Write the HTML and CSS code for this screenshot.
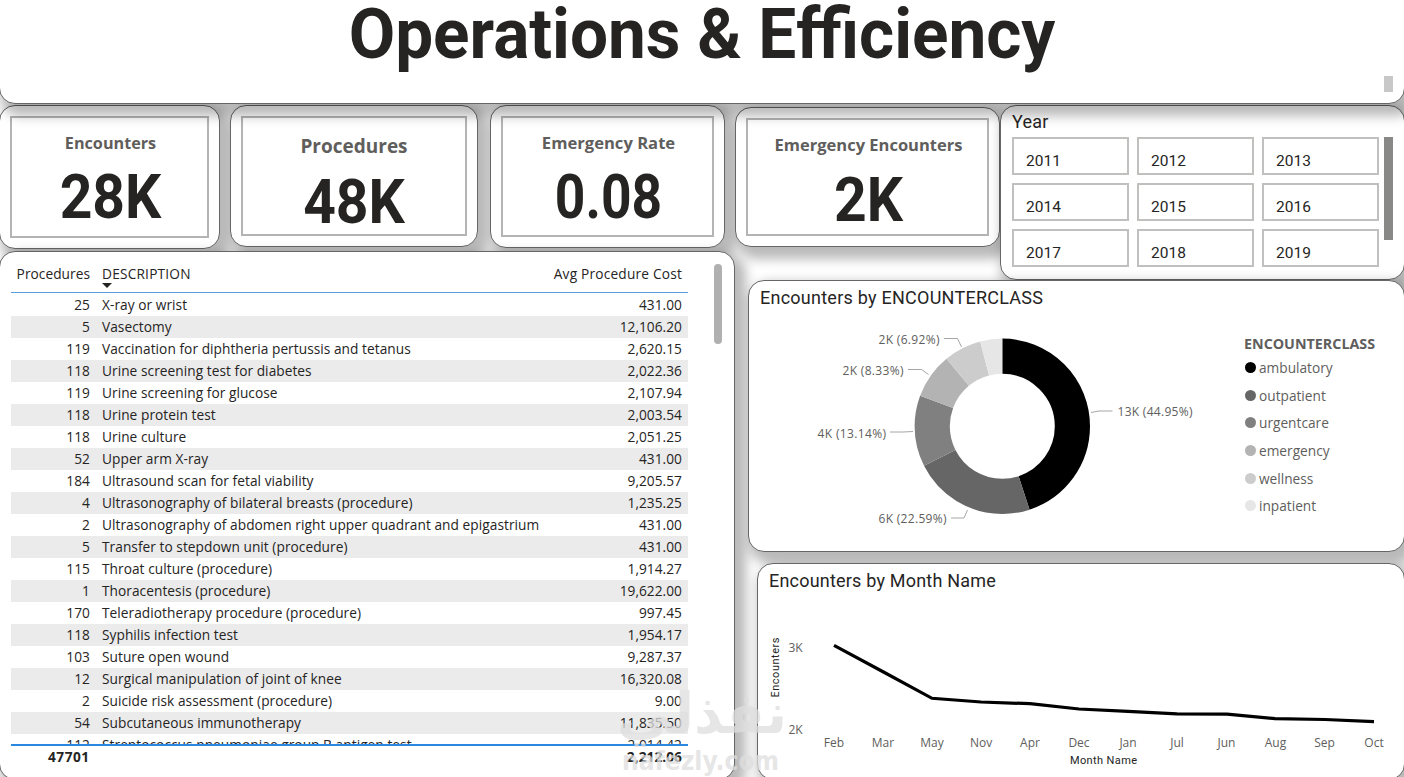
FILE: index.html
```
<!DOCTYPE html>
<html lang="en">
  <head>
    <meta charset="utf-8">
    <meta name="viewport" content="width=device-width, initial-scale=1">
    <title>Operations &amp; Efficiency</title>
    <link rel="stylesheet" href="styles.css">
  </head>
  <body>
    <header class="panel banner">
      <h1>Operations &amp; Efficiency</h1>
      <span class="banner-thumb"></span>
    </header>

    <main class="board">
      <section class="kpis">
        <div class="panel kpi kpi-encounters">
          <div class="kpi-box"><h2>Encounters</h2><p>28K</p></div>
        </div>
        <div class="panel kpi kpi-procedures">
          <div class="kpi-box"><h2>Procedures</h2><p>48K</p></div>
        </div>
        <div class="panel kpi kpi-rate">
          <div class="kpi-box"><h2>Emergency Rate</h2><p>0.08</p></div>
        </div>
        <div class="panel kpi kpi-emergency">
          <div class="kpi-box"><h2>Emergency Encounters</h2><p>2K</p></div>
        </div>
      </section>

      <section class="panel slicer">
        <h3>Year</h3>
        <div class="slicer-body">
          <div class="years">
            <button>2011</button><button>2012</button><button>2013</button>
            <button>2014</button><button>2015</button><button>2016</button>
            <button>2017</button><button>2018</button><button>2019</button>
          </div>
          <span class="slicer-thumb"></span>
        </div>
      </section>

      <section class="panel procedures">
        <div class="table-wrap">
          <div class="table-clip">
            <table>
              <thead>
                <tr><th>Procedures</th><th class="desc">DESCRIPTION<i class="sort"></i></th><th class="cost">Avg Procedure Cost</th></tr>
              </thead>
              <tbody>
                <tr><td>25</td><td>X-ray or wrist</td><td>431.00</td></tr>
                <tr><td>5</td><td>Vasectomy</td><td>12,106.20</td></tr>
                <tr><td>119</td><td>Vaccination for diphtheria pertussis and tetanus</td><td>2,620.15</td></tr>
                <tr><td>118</td><td>Urine screening test for diabetes</td><td>2,022.36</td></tr>
                <tr><td>119</td><td>Urine screening for glucose</td><td>2,107.94</td></tr>
                <tr><td>118</td><td>Urine protein test</td><td>2,003.54</td></tr>
                <tr><td>118</td><td>Urine culture</td><td>2,051.25</td></tr>
                <tr><td>52</td><td>Upper arm X-ray</td><td>431.00</td></tr>
                <tr><td>184</td><td>Ultrasound scan for fetal viability</td><td>9,205.57</td></tr>
                <tr><td>4</td><td>Ultrasonography of bilateral breasts (procedure)</td><td>1,235.25</td></tr>
                <tr><td>2</td><td>Ultrasonography of abdomen right upper quadrant and epigastrium</td><td>431.00</td></tr>
                <tr><td>5</td><td>Transfer to stepdown unit (procedure)</td><td>431.00</td></tr>
                <tr><td>115</td><td>Throat culture (procedure)</td><td>1,914.27</td></tr>
                <tr><td>1</td><td>Thoracentesis (procedure)</td><td>19,622.00</td></tr>
                <tr><td>170</td><td>Teleradiotherapy procedure (procedure)</td><td>997.45</td></tr>
                <tr><td>118</td><td>Syphilis infection test</td><td>1,954.17</td></tr>
                <tr><td>103</td><td>Suture open wound</td><td>9,287.37</td></tr>
                <tr><td>12</td><td>Surgical manipulation of joint of knee</td><td>16,320.08</td></tr>
                <tr><td>2</td><td>Suicide risk assessment (procedure)</td><td>9.00</td></tr>
                <tr><td>54</td><td>Subcutaneous immunotherapy</td><td>11,835.50</td></tr>
                <tr><td>112</td><td>Streptococcus pneumoniae group B antigen test</td><td>2,014.42</td></tr>
              </tbody>
            </table>
          </div>
          <div class="totals"><span>47701</span><span>2,212.06</span></div>
        </div>
        <span class="table-thumb"></span>
      </section>

      <section class="charts">
        <div class="panel donut">
          <h3>Encounters by ENCOUNTERCLASS</h3>
          <div class="donut-body">
            <svg class="donut-chart" width="479" height="230" viewBox="760 312 479 230">
              <g transform="rotate(-90 1002.3 426.3)" fill="none" stroke-width="35.2">
                <circle cx="1002.3" cy="426.3" r="70.1" pathLength="100" stroke="#000" stroke-dasharray="44.95 100"/>
                <circle cx="1002.3" cy="426.3" r="70.1" pathLength="100" stroke="#666" stroke-dasharray="22.59 100" stroke-dashoffset="-44.95"/>
                <circle cx="1002.3" cy="426.3" r="70.1" pathLength="100" stroke="#808080" stroke-dasharray="13.14 100" stroke-dashoffset="-67.54"/>
                <circle cx="1002.3" cy="426.3" r="70.1" pathLength="100" stroke="#b3b3b3" stroke-dasharray="8.33 100" stroke-dashoffset="-80.68"/>
                <circle cx="1002.3" cy="426.3" r="70.1" pathLength="100" stroke="#ccc" stroke-dasharray="6.92 100" stroke-dashoffset="-89.01"/>
                <circle cx="1002.3" cy="426.3" r="70.1" pathLength="100" stroke="#e6e6e6" stroke-dasharray="4.07 100" stroke-dashoffset="-95.93"/>
              </g>
              <g class="leaders">
                <polyline points="1091,412.5 1099,411 1112.5,411"/>
                <polyline points="967.5,510 964,518 951,518"/>
                <polyline points="913,431.5 903,432 890,432"/>
                <polyline points="928.5,374.5 921.5,369.5 908,369.5"/>
                <polyline points="961.5,347 957.5,338.5 944,338.5"/>
              </g>
              <g class="chart-label">
                <text x="1117.5" y="416" textLength="75">13K (44.95%)</text>
                <text x="878.5" y="523" textLength="68">6K (22.59%)</text>
                <text x="817.5" y="438" textLength="68.5">4K (13.14%)</text>
                <text x="842.5" y="375" textLength="61">2K (8.33%)</text>
                <text x="878.5" y="344" textLength="61">2K (6.92%)</text>
              </g>
            </svg>
            <div class="legend">
              <h4>ENCOUNTERCLASS</h4>
              <ul>
                <li class="c1">ambulatory</li>
                <li class="c2">outpatient</li>
                <li class="c3">urgentcare</li>
                <li class="c4">emergency</li>
                <li class="c5">wellness</li>
                <li class="c6">inpatient</li>
              </ul>
            </div>
          </div>
        </div>

        <div class="panel trend">
          <h3>Encounters by Month Name</h3>
          <svg class="trend-chart" width="636" height="177" viewBox="769 600 636 177">
            <polyline class="series" points="834,645.3 883.5,672 932,698.3 981,702 1030,703.7 1079,709 1128,711.3 1177,713.9 1227,714.2 1275,718.6 1325,719.5 1374,721.7"/>
            <g class="chart-label">
              <text x="788.5" y="652">3K</text>
              <text x="788.5" y="734">2K</text>
            </g>
            <g class="chart-label months">
              <text x="834" y="747">Feb</text>
              <text x="883" y="747">Mar</text>
              <text x="932" y="747">May</text>
              <text x="981" y="747">Nov</text>
              <text x="1030" y="747">Apr</text>
              <text x="1079" y="747">Dec</text>
              <text x="1128" y="747">Jan</text>
              <text x="1177" y="747">Jul</text>
              <text x="1226.5" y="747">Jun</text>
              <text x="1275.5" y="747">Aug</text>
              <text x="1324.5" y="747">Sep</text>
              <text x="1374" y="747">Oct</text>
            </g>
            <g class="axis-title">
              <text x="1070" y="764" textLength="67">Month Name</text>
              <text transform="translate(779 697.5) rotate(-90)" textLength="60">Encounters</text>
            </g>
          </svg>
        </div>
      </section>
    </main>

    <svg class="watermark" width="180" height="100" viewBox="612 677 180 100">
      <text class="wm-ar" x="702" y="733" text-anchor="middle" textLength="170" lengthAdjust="spacingAndGlyphs">نفذلي</text>
      <text class="wm-en" x="622" y="770" textLength="157" lengthAdjust="spacingAndGlyphs">nafezly.com</text>
    </svg>
  </body>
</html>
```

FILE: styles.css
```
* { box-sizing: border-box; }
body { margin: 0; width: 1404px; height: 777px; overflow: hidden; position: relative; background: #fff; color: #252423; font-family: "Open Sans", "Noto Sans", sans-serif; }
h1, h2, h3, h4, p, ul { margin: 0; padding: 0; }

.panel { background: #fff; border: 1px solid #666; border-radius: 16px; box-shadow: 6px 7px 12px 5px rgba(0,0,0,0.28); }

/* title */
.banner { position: relative; z-index: 2; height: 124px; margin: -20px -1px 0; padding-top: 11px; text-align: center; }
h1 { font: 700 71px/84px Roboto, sans-serif; transform: scaleX(0.95); white-space: nowrap; }
.banner-thumb { position: absolute; right: 11px; bottom: 11px; width: 9px; height: 16px; background: #c8c8c8; }

.board { display: grid; grid-template-columns: 735px 265px 404px; grid-template-rows: 146px 30px 500px; }

/* cards */
.kpis { grid-area: 1 / 1 / 2 / 3; display: flex; align-items: flex-start; }
.kpi { padding: 10px; margin-top: 1px; flex: none; }
.kpi-box { height: 100%; border: 2px solid #b4b4b4; padding-left: 2px; text-align: center; }
.kpi h2 { font-size: 16.2px; line-height: 22px; color: #605e5c; white-space: nowrap; margin-top: 14px; }
.kpi p { font: 700 62px/62px Roboto, sans-serif; transform: scaleX(0.92); margin-top: 12px; white-space: nowrap; }
.kpi-encounters { width: 221px; height: 144px; margin-left: -1px; }
.kpi-procedures { width: 248px; height: 142px; margin-left: 10px; }
.kpi-procedures .kpi-box { padding-left: 0; }
.kpi-procedures h2 { font-size: 19px; margin-top: 17px; }
.kpi-procedures p { margin-top: 14px; }
.kpi-rate { width: 235px; height: 143px; margin-left: 12px; }
.kpi-rate h2 { font-size: 16.6px; }
.kpi-rate p { transform: scaleX(0.86); }
.kpi-emergency { width: 265px; height: 140px; margin: 3px 0 0 10px; }
.kpi-emergency h2 { font-size: 16.5px; }
.kpi-emergency p { margin-top: 13px; }

/* year slicer */
.slicer { grid-area: 1 / 3 / 3 / 4; margin-top: 1px; width: 405px; height: 175px; padding: 5px 0 0 11px; }
h3 { font: 400 18px/22px Roboto, sans-serif; letter-spacing: 0.25px; white-space: nowrap; }
.slicer-body { display: flex; margin-top: 4px; }
.years { display: grid; grid-template-columns: repeat(3, 117px); gap: 8px; width: 368px; }
.years button { height: 38px; background: #fff; border: 2px solid #c0c0be; padding: 9px 0 0 12px; font: 400 15.5px/20px Roboto, sans-serif; text-align: left; color: #252423; }
.slicer-thumb { width: 9px; height: 103px; margin-left: 4px; background: #888886; }

/* procedures table */
.procedures { grid-area: 2 / 1 / 4 / 2; height: 529px; margin: 1px 0 0 -1px; padding: 12px 0 0 11px; display: flex; }
.table-wrap { width: 677px; font-size: 13.7px; letter-spacing: 0.05px; }
.table-clip { height: 480px; overflow: hidden; }
table { width: 100%; border-spacing: 0; table-layout: fixed; }
th { font-weight: 400; text-align: left; height: 29px; line-height: 20px; padding: 0; vertical-align: top; border-bottom: 1px solid #5a9ddb; white-space: nowrap; position: relative; }
th:first-child { width: 91px; text-align: right; padding-right: 12px; }
th.cost { width: 150px; text-align: right; padding-right: 6px; letter-spacing: 0.2px; }
th.desc { letter-spacing: 0.2px; }
tbody::before { content: ""; display: block; height: 1px; }
td { height: 22px; line-height: 22px; padding: 0; white-space: nowrap; }
td:first-child { text-align: right; padding-right: 12px; }
td:last-child { text-align: right; padding-right: 6px; }
tbody tr:nth-child(even) { background: #ebebeb; }
.sort { position: absolute; left: 0; top: 19px; border: 5px solid transparent; border-top-color: #252423; border-bottom: 0; }
.totals { display: flex; justify-content: space-between; border-top: 2px solid #2b88e0; padding: 0 6px 0 37px; font-weight: 700; line-height: 22px; }
.totals span:first-child { letter-spacing: 0.5px; }
.table-thumb { width: 8px; height: 80px; margin-left: 26px; border-radius: 4px; background: #b0b0b0; }

/* charts */
.charts { grid-area: 3 / 2 / 4 / 4; }
.donut { width: 657px; height: 272px; margin: 0 0 0 13px; padding: 6px 0 0 11px; }
.donut-body { display: flex; margin-top: 3px; }
.donut-chart { flex: none; }
.leaders polyline { fill: none; stroke: #a6a6a6; }
.chart-label { font-size: 12px; fill: #605e5c; }
.months { text-anchor: middle; }
.legend { font-size: 13.7px; color: #605e5c; padding: 22px 0 0 5px; }
.legend h4 { font-size: 14.3px; line-height: 20px; }
.legend ul { list-style: none; }
.legend li { display: flex; align-items: center; height: 27.6px; padding-left: 1px; }
.legend li::before { content: ""; width: 11px; height: 11px; margin-right: 3px; border-radius: 50%; background: #000; }
.legend .c2::before { background: #666; }
.legend .c3::before { background: #808080; }
.legend .c4::before { background: #b3b3b3; }
.legend .c5::before { background: #ccc; }
.legend .c6::before { background: #e6e6e6; }

.trend { width: 648px; height: 217px; margin: 11px 0 0 22px; padding: 6px 0 0 11px; }
.trend h3 { letter-spacing: 0.2px; }
.trend-chart { display: block; margin-top: 8px; }
.series { fill: none; stroke: #000; stroke-width: 3.2; }
.axis-title { font: 400 11px Roboto, sans-serif; fill: #252423; }

.watermark { position: absolute; left: 612px; top: 677px; z-index: 3; fill: #dedede; opacity: 0.75; }
.wm-ar { font: 700 56px "DejaVu Sans", sans-serif; }
.wm-en { font: 700 26px "DejaVu Sans", sans-serif; }
```
